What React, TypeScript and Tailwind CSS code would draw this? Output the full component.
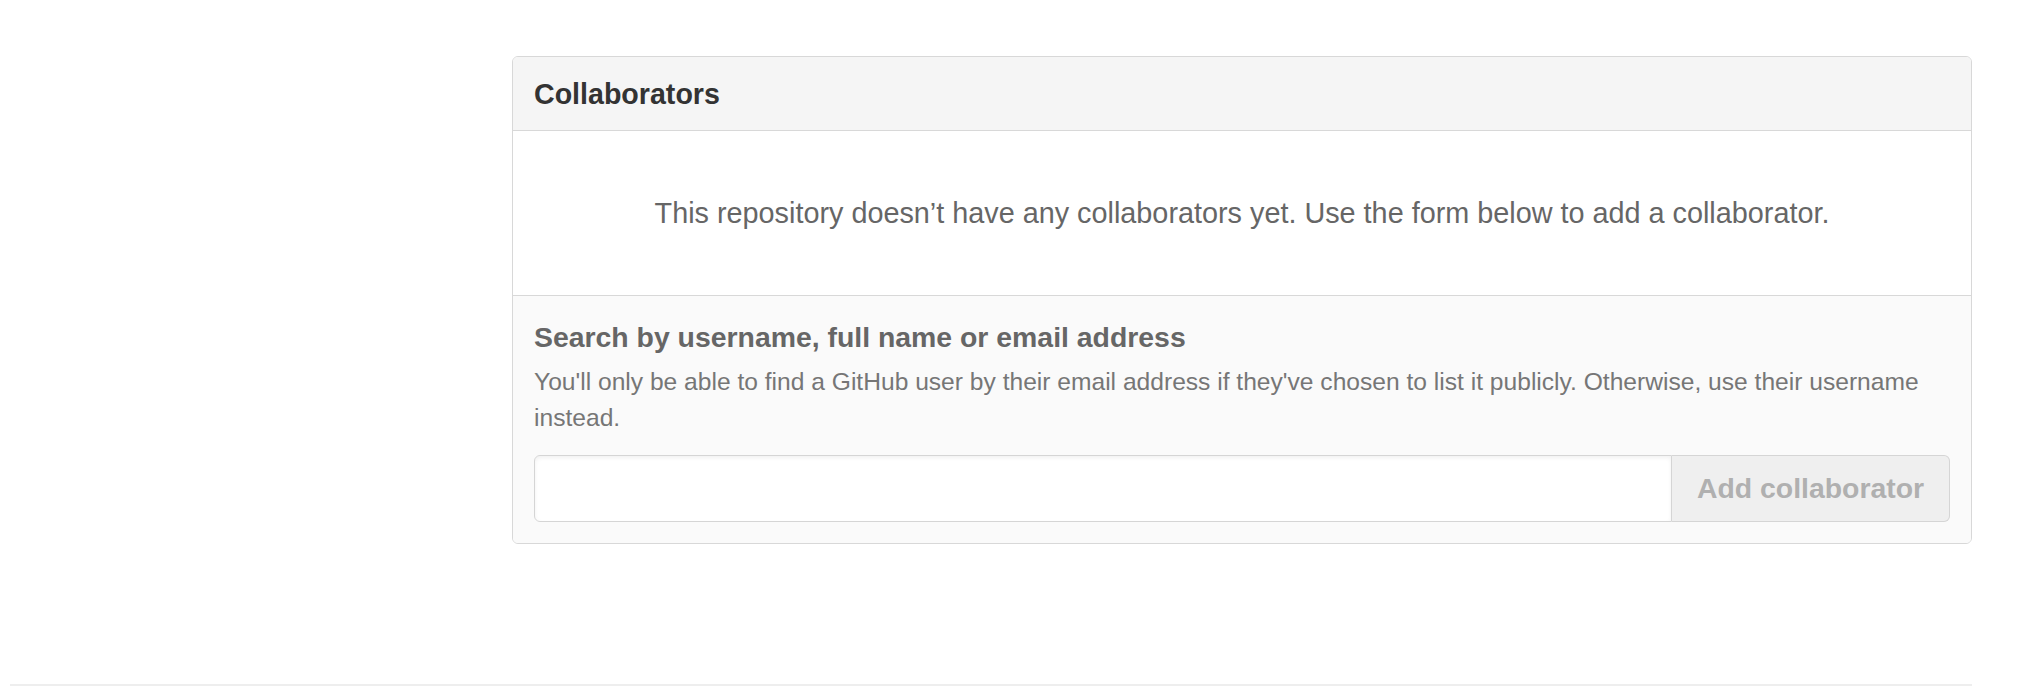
const App = () => {
  return (
    <div className="min-h-screen bg-white font-['Liberation_Sans',Arial,sans-serif]">
      <div className="ml-[10px] w-[1962px] pt-[56px]">
        <div className="flex">
          {/* empty sidebar column */}
          <div className="w-[502px] shrink-0"></div>

          <div className="flex-1 rounded-[6px] border border-[#d8d8d8] overflow-hidden">
            <div className="bg-[#f5f5f5] border-b border-[#d8d8d8] px-[21px] pt-[16px] pb-[15px]">
              <h3 className="text-[28.6px] leading-[42px] font-bold text-[#333]">Collaborators</h3>
            </div>

            <div className="bg-white py-[61px] text-center border-b border-[#d8d8d8]">
              <p className="text-[28.8px] leading-[42px] text-[#666]">
                This repository doesn’t have any collaborators yet. Use the form below to add a collaborator.
              </p>
            </div>

            <div className="bg-[#fafafa] px-[21px] pt-[20px] pb-[21px]">
              <h4 className="text-[28.4px] leading-[42px] font-bold text-[#666]">
                Search by username, full name or email address
              </h4>
              <p className="mt-[6px] text-[24.6px] leading-[36px] text-[#767676]">
                You'll only be able to find a GitHub user by their email address if they've chosen to list it publicly. Otherwise, use their username instead.
              </p>
              <div className="mt-[19px] flex h-[67px]">
                <input
                  type="text"
                  className="flex-1 rounded-l-[6px] border border-[#d5d5d5] bg-white px-4 text-[26px] outline-none shadow-[inset_0_2px_4px_rgba(0,0,0,0.06)]"
                />
                <button
                  disabled
                  className="w-[278px] rounded-r-[6px] border border-l-0 border-[#d5d5d5] bg-[#efefef] text-[28.4px] font-bold text-[#b0b0b0]"
                >
                  Add collaborator
                </button>
              </div>
            </div>
          </div>
        </div>

        <div className="mt-[140px] h-[2px] bg-[#eeeeee]"></div>
      </div>
    </div>
  );
};

export default App;
